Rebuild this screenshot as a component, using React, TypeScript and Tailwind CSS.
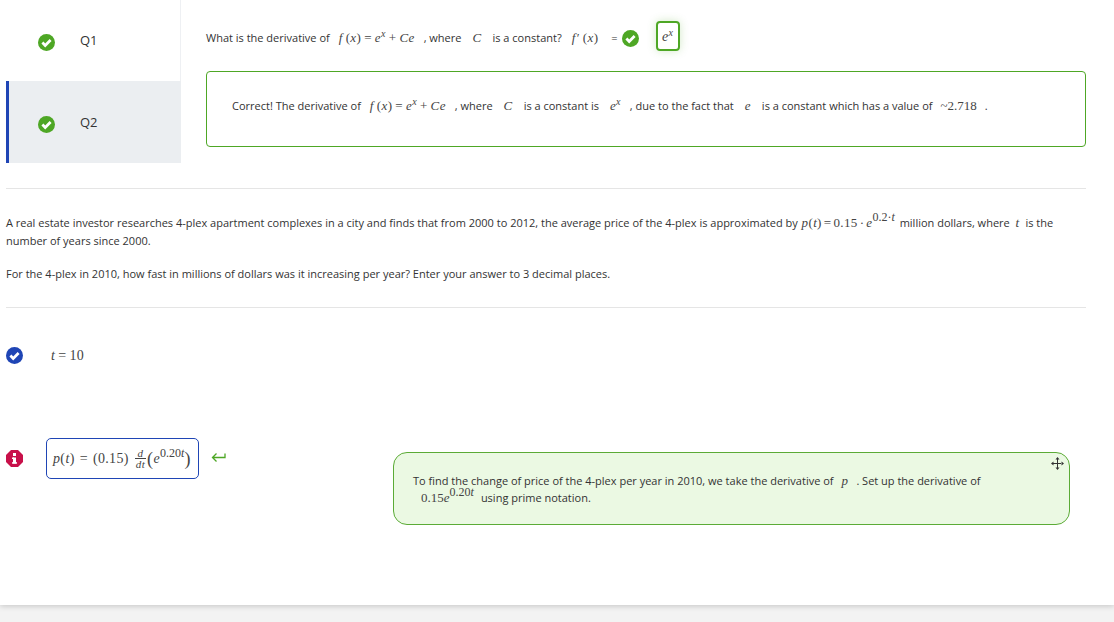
const open = "font-['Open_Sans',sans-serif]";

function Check({ color = "#4ea725", size = 17 }: { color?: string; size?: number }) {
  return (
    <svg width={size} height={size} viewBox="0 0 17 17" className="shrink-0">
      <circle cx="8.5" cy="8.5" r="8.5" fill={color} />
      <path d="M4.400 8.600 7.200 11.400 12.600 6" fill="none" stroke="#fff" strokeWidth="2.800" />
    </svg>
  );
}

function M({ children, className = "" }: { children: React.ReactNode; className?: string }) {
  return <span className={`font-['Liberation_Serif',serif] text-[13px] tracking-[0.35px] text-[#444] whitespace-nowrap ${className}`}>{children}</span>;
}
const I = ({ children }: { children: React.ReactNode }) => <i>{children}</i>;
const Op = ({ children, className = "mx-[3px]" }: { children: React.ReactNode; className?: string }) => <span className={className}>{children}</span>;
const Sup = ({ children, className = "" }: { children: React.ReactNode; className?: string }) => (
  <sup className={`text-[10px] leading-[0] ${className}`}>{children}</sup>
);

function Fx() {
  return (
    <M className="mx-[9px]">
      <I>f</I><span className="ml-[3px]">(<I>x</I>)</span><Op>=</Op><I>e</I>
      <Sup><I>x</I></Sup><Op>+</Op><I>Ce</I>
    </M>
  );
}

function Row({ label, active }: { label: string; active?: boolean }) {
  return (
    <div className={`flex items-center border-l-[3px] ${active ? "h-[82px] border-[#1f45b5] bg-[#ebeef1]" : "h-[81px] border-transparent border-r border-r-[#eef0f3] pb-[1px]"}`}>
      <div className="ml-[29px] mt-[4px]"><Check /></div>
      <span className="ml-[25px] mt-[2px] text-[13px] text-[#333]">{label}</span>
    </div>
  );
}

export default function App() {
  return (
    <div className={`${open} w-[1114px] h-[622px] overflow-hidden bg-[#f3f3f3] text-[11px] text-[#333]`}>
      <div className="h-[605px] bg-white shadow-[0_1px_6px_rgba(0,0,0,0.2)] px-[6px]">
        <div className="flex w-[1080px]">
          <div className="w-[175px] shrink-0 flex flex-col">
            <Row label="Q1" />
            <Row label="Q2" active />
          </div>
          <div className="flex-1 pl-[25px] flex flex-col">
            <div className="h-[71px] flex items-center pt-[5px]">
              <span>What is the derivative of</span>
              <Fx />
              <span>, where</span>
              <M className="mx-[11px]"><I>C</I></M>
              <span>is a constant?</span>
              <M className="mx-[10px]"><I>f</I><span className="ml-[1px] mr-[2px]">′</span><span className="ml-[1px]">(<I>x</I>)</span></M>
              <span className="ml-[3px] mr-[4px]">=</span>
              <Check />
              <div className="ml-[17px] -mt-[4px] w-[24px] h-[30px] rounded-[4px] border-2 border-[#4ea725] flex items-center justify-center shadow-[0_0_8px_rgba(78,167,37,0.25)]">
                <M className="text-[14px]"><I>e</I><Sup><I>x</I></Sup></M>
              </div>
            </div>
            <div className="h-[76px] rounded-[4px] border border-[#4ea725] flex items-center pl-[25px] pb-[6px]">
              <span>Correct! The derivative of</span>
              <Fx />
              <span>, where</span>
              <M className="mx-[11px]"><I>C</I></M>
              <span>is a constant is</span>
              <M className="ml-[11px] mr-[9px]"><I>e</I><Sup><I>x</I></Sup></M>
              <span>, due to the fact that</span>
              <M className="mx-[11px]"><I>e</I></M>
              <span>is a constant which has a value of</span>
              <M className="mx-[8px] text-[12px] tracking-[0px]">~2.718</M>
              <span>.</span>
            </div>
          </div>
        </div>

        <div className="w-[1080px] mt-[25px] border-t border-[#e5e5e5] h-[120px] border-b pt-[25px]">
          <p className="leading-[18px]">
            A real estate investor researches 4-plex apartment complexes in a city and finds that from 2000 to 2012, the average price of the 4-plex is approximated by{" "}
            <M className="mx-[1px] leading-none"><I>p</I>(<I>t</I>)<Op className="mx-[2px]">=</Op>0.15<Op className="mx-[2px]">·</Op><I>e</I><Sup className="text-[12px] tracking-[0px]">0.2·<I>t</I></Sup></M>{" "}
            <span className="ml-[1px]">million dollars, where</span> <M className="mx-[3px] leading-none"><I>t</I></M> is the number of years since 2000.
          </p>
          <p className="leading-[18px] mt-[15px]">For the 4-plex in 2010, how fast in millions of dollars was it increasing per year? Enter your answer to 3 decimal places.</p>
        </div>

        <div className="mt-[39px] h-[17px] flex items-center">
          <Check color="#1f45b5" />
          <M className="ml-[28px] text-[14px]"><I>t</I><Op>=</Op>10</M>
        </div>

        <div className="mt-[74px] h-[87px] w-[1080px] flex items-start">
          <svg width="17" height="17" viewBox="0 0 17 17" className="mt-[12px] shrink-0">
            <path d="M5 0h7l5 5v7l-5 5H5l-5-5V5z" fill="#c8104a" />
            <rect x="7" y="3" width="3" height="3" fill="#fff" />
            <rect x="7" y="7.500" width="3" height="6" fill="#fff" />
            <rect x="6" y="7.500" width="2" height="1.500" fill="#fff" />
            <rect x="6" y="12.200" width="5" height="1.500" fill="#fff" />
          </svg>
          <div className="ml-[23px] w-[153px] h-[41px] rounded-[5px] border border-[#1f45b5] flex items-center pl-[6px] shrink-0">
            <M className="text-[14px] whitespace-nowrap flex items-center">
              <span><I>p</I>(<I>t</I>)<Op className="mx-[5px]">=</Op><span>(0.15)</span></span>
              <span className="inline-flex flex-col items-center text-[11px] leading-[10px] ml-[6px] mr-[1px]">
                <I>d</I>
                <span className="border-t border-[#444] px-[1px]"><I>dt</I></span>
              </span>
              <span className="text-[18px] font-light leading-none">(</span>
              <span className="leading-none"><I>e</I><Sup className="text-[12px] tracking-[0px]">0.20<I>t</I></Sup></span>
              <span className="text-[18px] font-light leading-none">)</span>
            </M>
          </div>
          <svg width="15" height="11" viewBox="0 0 15 11" className="ml-[12px] mt-[14px] shrink-0" fill="none" stroke="#4ea725" strokeWidth="1.300">
            <path d="M14 1.500v4H1.500M5.500 1.500l-4 4 4 4" />
          </svg>
          <div className="relative ml-[167px] mt-[14px] w-[677px] h-[73px] rounded-[14px] border border-[#5bab36] bg-[#ebf9e3] pl-[19px] pt-[19px] leading-[17px]">
            <div className="h-[17px] whitespace-nowrap">
              To find the change of price of the 4-plex per year in 2010, we take the derivative of
              <M className="mx-[8px]"><I>p</I></M>. Set up the derivative of
            </div>
            <div className="h-[17px] pl-[8px] whitespace-nowrap">
              <M className="mr-[7px] text-[12px] tracking-[0px]">0.15<I>e</I><Sup className="text-[12px]">0.20<I>t</I></Sup></M>
              using prime notation.
            </div>
            <svg width="13" height="13" viewBox="0 0 13 13" className="absolute right-[5px] top-[4px]" fill="#333">
              <path d="M6 2h1v9H6zM2 6h9v1H2zM6.500 0 8.500 2.500h-4zM6.500 13l-2-2.500h4zM0 6.500 2.500 4.500v4zM13 6.500l-2.500-2v4z" />
            </svg>
          </div>
        </div>
      </div>
    </div>
  );
}
